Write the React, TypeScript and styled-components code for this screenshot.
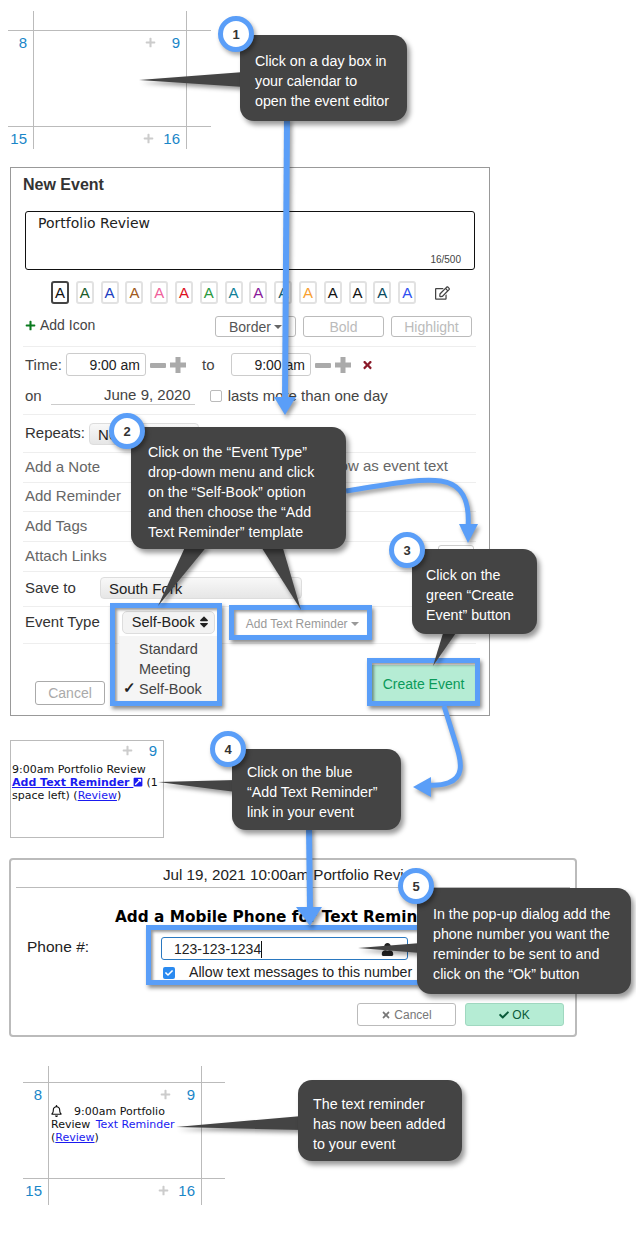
import React from "react";
import styled, { createGlobalStyle } from "styled-components";
import { FaPlus, FaTimes, FaCheck, FaRegEdit, FaRegBell, FaSort, FaExternalLinkSquareAlt, FaUser } from "react-icons/fa";

const Global = createGlobalStyle`
  html, body { margin: 0; padding: 0; background: #fff; }
  body { font-family: "Liberation Sans", Arial, sans-serif; color: #333; }
  * { box-sizing: border-box; }
`;

const Page = styled.div`
  position: relative;
  width: 636px;
  height: 1239px;
  overflow: hidden;
  display: flex;
  flex-direction: column;
  align-items: flex-start;
`;

/* calendar fragments */
const CalendarGrid = styled.div<{ $left: number; $top: number; $first: number; $last: number; $end: number }>`
  margin: ${p => p.$top}px 0 0 ${p => p.$left}px;
  display: grid;
  grid-template-columns: 26px 153px ${p => p.$last}px;
  grid-template-rows: ${p => p.$first}px 96px ${p => p.$end}px;
`;
const Cell = styled.div<{ $right?: boolean; $bottom?: boolean }>`
  border-right: ${p => (p.$right ? "1px solid #bbb" : "none")};
  border-bottom: ${p => (p.$bottom ? "1px solid #bbb" : "none")};
  min-width: 0;
`;
const DayHead = styled.div`
  display: flex;
  justify-content: flex-end;
  align-items: center;
  gap: 9px;
  height: 22px;
  padding-right: 6px;
  font-size: 15px;
  color: #1a86c8;
`;
const DayNumber = styled.span`
  min-width: 15px;
  text-align: right;
`;
const GrayPlus = styled(FaPlus)`
  width: 11px;
  height: 11px;
  color: #ccc;
`;
const EventText = styled.div`
  font-family: "DejaVu Sans", Verdana, sans-serif;
  font-size: 11px;
  line-height: 13px;
  color: #111;
  padding: 0 0 0 2px;
  a { color: #1a1af0; }
`;
const BellIcon = styled(FaRegBell)`
  width: 11px;
  height: 12px;
  margin-right: 12px;
  vertical-align: -2px;
`;
const ReminderText = styled.span`
  color: #1a1af0;
  margin-left: 2px;
`;

function Calendar({ left, top, first, last, end, event }: { left: number; top: number; first: number; last: number; end: number; event?: React.ReactNode }) {
  return (
    <CalendarGrid $left={left} $top={top} $first={first} $last={last} $end={end}>
      <Cell $right $bottom />
      <Cell $right $bottom />
      <Cell $bottom />
      <Cell $right $bottom><DayHead><DayNumber>8</DayNumber></DayHead></Cell>
      <Cell $right $bottom>
        <DayHead><GrayPlus /><DayNumber>9</DayNumber></DayHead>
        {event}
      </Cell>
      <Cell $bottom />
      <Cell $right><DayHead><DayNumber>15</DayNumber></DayHead></Cell>
      <Cell $right><DayHead><GrayPlus /><DayNumber>16</DayNumber></DayHead></Cell>
      <Cell />
    </CalendarGrid>
  );
}

/* editor */
const Editor = styled.section`
  margin: 18px 0 0 10px;
  width: 480px;
  height: 549px;
  border: 1px solid #999;
  padding: 8px 13px 0;
  background: #fff;
  display: flex;
  flex-direction: column;
`;
const EditorTitle = styled.h2`
  margin: 0 0 0 -1px;
  font-size: 16px;
  line-height: 18px;
  font-weight: bold;
  color: #333;
  height: 35px;
`;
const Note = styled.div`
  position: relative;
  margin-left: 1px;
  width: 450px;
  height: 59px;
  border: 1px solid #111;
  border-radius: 3px;
  padding: 3px 12px;
  font-family: "DejaVu Sans", Verdana, sans-serif;
  font-size: 14px;
  line-height: 16px;
  color: #222;
`;
const Counter = styled.span`
  position: absolute;
  right: 13px;
  bottom: 3px;
  font-family: "Liberation Sans", Arial, sans-serif;
  font-size: 10px;
  line-height: 12px;
  color: #444;
`;
const Swatches = styled.div`
  display: flex;
  align-items: center;
  gap: 6.8px;
  margin: 11px 0 0 27px;
  height: 23px;
`;
const Swatch = styled.div<{ $color: string; $selected?: boolean }>`
  width: 18px;
  height: 23px;
  display: flex;
  align-items: center;
  justify-content: center;
  border: 2px solid ${p => (p.$selected ? "#444" : "#e2e2e2")};
  border-radius: 3px;
  font-size: 15px;
  color: ${p => p.$color};
`;
const EditIcon = styled(FaRegEdit)`
  width: 15px;
  height: 14px;
  color: #444;
  margin-left: 12px;
`;
const StyleRow = styled.div`
  display: flex;
  align-items: center;
  margin: 12px 0 0 -1px;
  padding: 0 4px 9px 2px;
  height: 31px;
  border-bottom: 1px solid #eee;
  font-size: 14px;
  color: #444;
`;
const GreenPlus = styled(FaPlus)`
  width: 11px;
  height: 11px;
  color: #0a7a1e;
  margin-right: 4px;
`;
const AddIcon = styled.span`
  flex: 1;
  margin-top: -3px;
  display: flex;
  align-items: center;
`;
const StyleButton = styled.div<{ $muted?: boolean }>`
  width: 81px;
  height: 21px;
  margin-left: 7px;
  border: 1px solid #bbb;
  border-radius: 3px;
  display: flex;
  align-items: center;
  justify-content: center;
  gap: 3px;
  font-size: 14px;
  color: ${p => (p.$muted ? "#bbb" : "#555")};
`;
const Caret = styled.span<{ $color?: string }>`
  display: inline-block;
  border-left: 4px solid transparent;
  border-right: 4px solid transparent;
  border-top: 4px solid ${p => p.$color || "#666"};
`;
const TimeRow = styled.div`
  display: flex;
  align-items: center;
  height: 23px;
  margin-top: 6px;
  font-size: 15px;
  color: #444;
  padding-left: 1px;
`;
const TimeLabel = styled.span`
  width: 41px;
  flex: none;
`;
const ToLabel = styled.span`
  width: 45px;
  flex: none;
  padding-left: 16px;
`;
const TimeInput = styled.div`
  width: 80px;
  height: 23px;
  border: 1px solid #ccc;
  border-radius: 3px;
  text-align: right;
  padding-right: 5px;
  font-size: 14px;
  line-height: 23px;
  color: #222;
`;
const StepIcon = styled.svg`
  width: 16px;
  height: 16px;
  margin-left: 4px;
  fill: #aaa;
  flex: none;
`;
const RemoveIcon = styled(FaTimes)`
  width: 11px;
  height: 12px;
  color: #8a1a2a;
  margin-left: 11px;
`;
const DateRow = styled.div`
  display: flex;
  align-items: center;
  height: 19px;
  margin-top: 10px;
  padding-left: 1px;
  font-size: 15px;
  color: #444;
`;
const DateField = styled.div`
  width: 144px;
  height: 19px;
  margin-left: 9px;
  border-bottom: 1px solid #ccc;
  text-align: right;
  padding-right: 4px;
  line-height: 18px;
`;
const CheckBox = styled.span`
  width: 12px;
  height: 12px;
  margin: 1px 6px 0 15px;
  border: 1px solid #bbb;
  border-radius: 2px;
  background: #fff;
`;
const Rule = styled.div`
  height: 1px;
  margin: 9px 0 0 -1px;
  background: #eee;
  flex: none;
`;
const Row = styled.div<{ $height: number; $lift?: number }>`
  display: flex;
  align-items: center;
  height: ${p => p.$height}px;
  border-bottom: 1px solid #eee;
  margin-left: -1px;
  padding: 0 0 ${p => p.$lift || 0}px 2px;
  font-size: 15px;
  color: #666;
  position: relative;
  flex: none;
`;
const DarkLabel = styled.span`
  color: #333;
  margin-top: -2px;
`;
const Select = styled.div<{ $width: number; $marginLeft: number }>`
  width: ${p => p.$width}px;
  height: 22px;
  margin-left: ${p => p.$marginLeft}px;
  padding-left: 8px;
  border: 1px solid #ddd;
  border-radius: 4px;
  background: linear-gradient(#f8f8f8, #e6e6e6);
  color: #222;
  line-height: 21px;
`;
const ShowText = styled.span`
  position: absolute;
  right: 28px;
  top: 4px;
`;
const LinkBox = styled.span`
  position: absolute;
  left: 415px;
  top: 3px;
  width: 36px;
  height: 24px;
  border: 1px solid #ccc;
  border-radius: 3px;
`;
const TypeSelect = styled.div`
  margin-left: 22px;
  width: 93px;
  height: 23px;
  display: flex;
  align-items: center;
  justify-content: space-between;
  padding: 0 5px 0 9px;
  border: 1px solid #ddd;
  border-radius: 5px;
  background: #f3f3f3;
  color: #222;
  font-size: 14.5px;
`;
const SortIcon = styled(FaSort)`
  width: 10px;
  height: 14px;
  color: #222;
`;
const TypeMenu = styled.div`
  position: absolute;
  left: 96px;
  top: 29px;
  width: 98px;
  height: 66px;
  padding: 3px 0 0 20px;
  background: #f5f5f5;
  font-size: 14.5px;
  line-height: 20px;
  color: #444;
`;
const MenuCheck = styled.span`
  position: absolute;
  left: 4px;
  bottom: 4px;
  font-size: 15px;
  font-weight: bold;
  line-height: 20px;
  color: #222;
`;
const TemplateButton = styled.div`
  margin: 3px 0 0 20px;
  width: 132px;
  height: 25px;
  display: flex;
  align-items: center;
  gap: 3px;
  padding-left: 11px;
  font-size: 12px;
  color: #999;
`;
const Footer = styled.div`
  display: flex;
  justify-content: space-between;
  align-items: flex-end;
  padding: 0 0 0 11px;
  height: 61px;
`;
const CancelButton = styled.div`
  width: 70px;
  height: 24px;
  border: 1px solid #aaa;
  border-radius: 3px;
  text-align: center;
  line-height: 22px;
  font-size: 14px;
  color: #aaa;
`;
const CreateButton = styled.div`
  width: 103px;
  height: 38px;
  margin: 0 1px 2px 0;
  background: #b5ecd4;
  display: flex;
  align-items: center;
  justify-content: center;
  font-size: 14px;
  color: #0a9a5a;
`;

/* month cell */
const MonthCell = styled.section`
  margin: 24px 0 0 10px;
  width: 154px;
  height: 98px;
  border: 1px solid #bbb;
`;
const MonthHead = styled(DayHead)`
  height: 19px;
  padding-right: 6px;
`;
const MonthText = styled(EventText)`
  margin-top: 3px;
  padding-left: 1px;
`;
const BoldLink = styled.a`
  font-weight: bold;
`;
const LinkIcon = styled(FaExternalLinkSquareAlt)`
  width: 10px;
  height: 10px;
  color: #1a1af0;
  margin: 0 3px 0 0;
  vertical-align: -1px;
`;

/* dialog */
const Dialog = styled.section`
  margin: 20px 0 0 9px;
  width: 568px;
  height: 179px;
  border: 2px solid #bbb;
  border-radius: 4px;
  padding: 0 5px;
`;
const DialogHeader = styled.div`
  height: 28px;
  border-bottom: 1px solid #bbb;
  text-align: center;
  padding: 6px 0 0;
  font-size: 15.2px;
  line-height: 17px;
  color: #222;
  white-space: nowrap;
`;
const DialogTitle = styled.h3`
  margin: 20px 0 0;
  padding-left: 99px;
  font-family: "DejaVu Sans", Verdana, sans-serif;
  font-size: 15.3px;
  line-height: 18px;
  font-weight: bold;
  color: #000;
  white-space: nowrap;
`;
const PhoneRow = styled.div`
  display: flex;
  margin-top: 11px;
  padding-left: 11px;
`;
const PhoneLabel = styled.span`
  width: 134px;
  font-size: 15.5px;
  line-height: 19px;
  color: #222;
`;
const PhoneColumn = styled.div`
  display: flex;
  flex-direction: column;
`;
const PhoneInput = styled.div`
  position: relative;
  width: 247px;
  height: 23px;
  border: 1px solid #2a78c0;
  border-radius: 3px;
  padding-left: 12px;
  font-size: 14px;
  line-height: 23px;
  color: #222;
  display: flex;
`;
const Caret2 = styled.span`
  width: 1px;
  height: 17px;
  margin-top: 3px;
  background: #111;
`;
const PersonIcon = styled(FaUser)`
  position: absolute;
  right: 13px;
  top: 5px;
  width: 13px;
  height: 13px;
  color: #222;
`;
const AllowRow = styled.div`
  display: flex;
  align-items: center;
  margin-top: 3px;
  font-size: 14.2px;
  line-height: 18px;
  color: #222;
  white-space: nowrap;
`;
const BlueCheck = styled.span`
  width: 12px;
  height: 12px;
  margin: 2px 14px 0 2px;
  border-radius: 2px;
  background: #2a8af0;
  color: #fff;
  display: flex;
  align-items: center;
  justify-content: center;
`;
const TinyCheck = styled(FaCheck)`
  width: 8px;
  height: 8px;
`;
const DialogActions = styled.div`
  display: flex;
  justify-content: flex-end;
  gap: 9px;
  margin-top: 22px;
  padding-right: 6px;
`;
const DialogButton = styled.div<{ $primary?: boolean }>`
  width: 99px;
  height: 23px;
  display: flex;
  align-items: center;
  justify-content: center;
  gap: 3px;
  border: 1px solid ${p => (p.$primary ? "#a0d8c0" : "#bbb")};
  border-radius: 3px;
  background: ${p => (p.$primary ? "#b5ecd4" : "#fff")};
  color: ${p => (p.$primary ? "#0a5a3a" : "#777")};
  font-size: 12px;
`;
const SmallIcon = styled.span`
  display: flex;
  font-size: 10px;
`;

/* annotations */
const Highlight = styled.div<{ $x: number; $y: number; $w: number; $h: number }>`
  position: absolute;
  left: ${p => p.$x}px;
  top: ${p => p.$y}px;
  width: ${p => p.$w}px;
  height: ${p => p.$h}px;
  border: 5px solid #5a9ef8;
  box-shadow: 2px 3px 4px rgba(0, 0, 0, 0.45), inset 2px 2px 3px rgba(0, 0, 0, 0.4);
`;
const Drawing = styled.svg`
  position: absolute;
  left: 0;
  top: 0;
  width: 636px;
  height: 1239px;
  filter: drop-shadow(2px 3px 2px rgba(0, 0, 0, 0.4));
  pointer-events: none;
`;
const Callout = styled.div<{ $x: number; $y: number; $w: number; $h: number; $top: number; $side: number }>`
  position: absolute;
  left: ${p => p.$x}px;
  top: ${p => p.$y}px;
  width: ${p => p.$w}px;
  height: ${p => p.$h}px;
  padding: ${p => p.$top}px 0 0 ${p => p.$side}px;
  background: #444;
  border-radius: 14px;
  box-shadow: 3px 4px 5px rgba(0, 0, 0, 0.4);
  color: #fff;
  font-size: 14.25px;
  line-height: 20px;
  white-space: pre;
`;
const Badge = styled.div<{ $x: number; $y: number }>`
  position: absolute;
  left: ${p => p.$x - 18}px;
  top: ${p => p.$y - 18}px;
  width: 36px;
  height: 36px;
  border-radius: 50%;
  border: 5px solid #5a9ef8;
  background: #fff;
  box-shadow: 2px 3px 4px rgba(0, 0, 0, 0.35);
  display: flex;
  align-items: center;
  justify-content: center;
  font-size: 13px;
  font-weight: bold;
  color: #333;
`;

const swatchColors = ["#111", "#1a5c2a", "#2040c0", "#a05a20", "#f0609a", "#dd1020", "#2a9a40", "#108098", "#8a1a9a", "#106070", "#f8a030", "#111", "#111", "#0a4a60", "#3050f0"];

const callouts = [
  { n: 1, bx: 236, by: 34, x: 240, y: 35, w: 167, h: 86, top: 16, side: 15, text: "Click on a day box in\nyour calendar to\nopen the event editor" },
  { n: 2, bx: 127, by: 431, x: 131, y: 427, w: 215, h: 122, top: 15, side: 17, text: "Click on the “Event Type”\ndrop-down menu and click\non the “Self-Book” option\nand then choose the “Add\nText Reminder” template" },
  { n: 3, bx: 407, by: 550, x: 412, y: 549, w: 125, h: 85, top: 16, side: 14, text: "Click on the\ngreen “Create\nEvent” button" },
  { n: 4, bx: 228, by: 749, x: 232, y: 749, w: 169, h: 81, top: 13, side: 15, text: "Click on the blue\n“Add Text Reminder”\nlink in your event" },
  { n: 5, bx: 416, by: 886, x: 417, y: 888, w: 214, h: 106, top: 16, side: 16, text: "In the pop-up dialog add the\nphone number you want the\nreminder to be sent to and\nclick on the “Ok” button" },
  { n: 0, bx: 0, by: 0, x: 298, y: 1080, w: 164, h: 81, top: 14, side: 15, text: "The text reminder\nhas now been added\nto your event" },
];

const Minus = () => (
  <StepIcon viewBox="0 0 16 16"><path d="M1 6h14a1 1 0 0 1 1 1v3a1 1 0 0 1-1 1H1a1 1 0 0 1-1-1V7a1 1 0 0 1 1-1z" /></StepIcon>
);
const Plus = () => (
  <StepIcon viewBox="0 0 16 16"><path d="M5.5 0h5v5.5H16v5h-5.5V16h-5v-5.5H0v-5h5.5z" /></StepIcon>
);

export default function App() {
  return (
    <Page>
      <Global />
      <Calendar left={8} top={11} first={20} last={24} end={22} />

      <Editor>
        <EditorTitle>New Event</EditorTitle>
        <Note>
          Portfolio Review
          <Counter>16/500</Counter>
        </Note>
        <Swatches>
          {swatchColors.map((c, i) => (
            <Swatch key={i} $color={c} $selected={i === 0}>A</Swatch>
          ))}
          <EditIcon />
        </Swatches>
        <StyleRow>
          <AddIcon><GreenPlus />Add Icon</AddIcon>
          <StyleButton>Border<Caret /></StyleButton>
          <StyleButton $muted>Bold</StyleButton>
          <StyleButton $muted>Highlight</StyleButton>
        </StyleRow>
        <TimeRow>
          <TimeLabel>Time:</TimeLabel>
          <TimeInput>9:00 am</TimeInput>
          <Minus />
          <Plus />
          <ToLabel>to</ToLabel>
          <TimeInput>9:00 am</TimeInput>
          <Minus />
          <Plus />
          <RemoveIcon />
        </TimeRow>
        <DateRow>
          on
          <DateField>June 9, 2020</DateField>
          <CheckBox />
          lasts more than one day
        </DateRow>
        <Rule />
        <Row $height={38} $lift={0}>
          <DarkLabel>Repeats:</DarkLabel>
          <Select $width={110} $marginLeft={4}>None</Select>
        </Row>
        <Row $height={30} $lift={3}>Add a Note<ShowText>Show as event text</ShowText></Row>
        <Row $height={29} $lift={3}>Add Reminder</Row>
        <Row $height={30} $lift={3}>Add Tags</Row>
        <Row $height={30} $lift={3}>Attach Links<LinkBox /></Row>
        <Row $height={35} $lift={2}>
          <DarkLabel>Save to</DarkLabel>
          <Select $width={202} $marginLeft={24}>South Fork</Select>
        </Row>
        <Row $height={37} $lift={6}>
          <DarkLabel>Event Type</DarkLabel>
          <TypeSelect>Self-Book<SortIcon /></TypeSelect>
          <TemplateButton>Add Text Reminder<Caret $color="#999" /></TemplateButton>
          <TypeMenu>
            Standard<br />Meeting<br />Self-Book
            <MenuCheck>✓</MenuCheck>
          </TypeMenu>
        </Row>
        <Footer>
          <CancelButton>Cancel</CancelButton>
          <CreateButton>Create Event</CreateButton>
        </Footer>
      </Editor>

      <MonthCell>
        <MonthHead><GrayPlus /><DayNumber>9</DayNumber></MonthHead>
        <MonthText>
          9:00am Portfolio Review<br />
          <BoldLink href="#">Add Text Reminder <LinkIcon /></BoldLink>(1<br />
          space left) (<a href="#">Review</a>)
        </MonthText>
      </MonthCell>

      <Dialog>
        <DialogHeader>Jul 19, 2021 10:00am Portfolio Review</DialogHeader>
        <DialogTitle>Add a Mobile Phone for Text Reminder</DialogTitle>
        <PhoneRow>
          <PhoneLabel>Phone #:</PhoneLabel>
          <PhoneColumn>
            <PhoneInput>123-123-1234<Caret2 /><PersonIcon /></PhoneInput>
            <AllowRow><BlueCheck><TinyCheck /></BlueCheck>Allow text messages to this number</AllowRow>
          </PhoneColumn>
        </PhoneRow>
        <DialogActions>
          <DialogButton><SmallIcon><FaTimes /></SmallIcon>Cancel</DialogButton>
          <DialogButton $primary><SmallIcon><FaCheck /></SmallIcon>OK</DialogButton>
        </DialogActions>
      </Dialog>

      <Calendar
        left={23}
        top={29}
        first={17}
        last={23}
        end={26}
        event={
          <EventText>
            <BellIcon />9:00am Portfolio<br />
            Review <ReminderText>Text Reminder</ReminderText><br />
            (<a href="#">Review</a>)
          </EventText>
        }
      />

      <Highlight $x={110} $y={603} $w={112} $h={103} />
      <Highlight $x={229} $y={605} $w={143} $h={35} />
      <Highlight $x={367} $y={658} $w={113} $h={48} />
      <Highlight $x={146} $y={925} $w={300} $h={60} />

      <Drawing viewBox="0 0 636 1239">
        <g fill="#5a9ef8">
          <path d="M287 118 L285 400" stroke="#5a9ef8" strokeWidth="6" fill="none" />
          <polygon points="274,397 296,397 285,415" />
          <path d="M346 491 C390 484 420 478 441 481 C462 484 470 500 468 528" stroke="#5a9ef8" strokeWidth="5" fill="none" />
          <polygon points="459,524 478,524 468,543" />
          <path d="M444 706 L450 725 C456 745 462 760 460 770 C458 783 442 786 428 785" stroke="#5a9ef8" strokeWidth="5" fill="none" />
          <polygon points="413,787 431,777 431,797" />
          <path d="M309 826 L310 910" stroke="#5a9ef8" strokeWidth="6" fill="none" />
          <polygon points="296,907 322,907 310,926" />
        </g>
        <g fill="#444">
          <polygon points="244,72 244,87 139,80" />
          <polygon points="186,545 208,545 158,606" />
          <polygon points="260,545 282,545 301,610" />
          <polygon points="444,630 458,630 433,666" />
          <polygon points="236,780 236,792 158,782" />
          <polygon points="421,943 421,953 358,948" />
          <polygon points="302,1116 302,1130 176,1127" />
        </g>
      </Drawing>

      {callouts.map(c => (
        <React.Fragment key={c.x}>
          <Callout $x={c.x} $y={c.y} $w={c.w} $h={c.h} $top={c.top} $side={c.side}>{c.text}</Callout>
          {c.n > 0 && <Badge $x={c.bx} $y={c.by}>{c.n}</Badge>}
        </React.Fragment>
      ))}
    </Page>
  );
}
